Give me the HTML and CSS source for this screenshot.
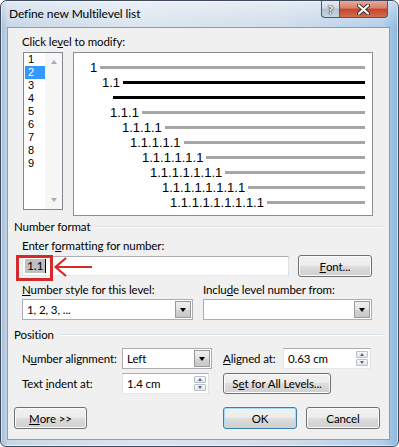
FILE: index.html
```html
<!DOCTYPE html>
<html lang="en">
<head>
    <meta charset="UTF-8">
    <meta name="viewport" content="width=device-width, initial-scale=1.0">
    <title>Define new Multilevel list</title>
    <link rel="stylesheet" href="styles.css">
</head>
<body>

    <div class="window">
        <!-- Title bar -->
        <div class="titlebar">
            <span class="title">Define new Multilevel list</span>
            <div class="caption-buttons">
                <span class="cap-btn help">?</span>
                <span class="cap-btn close">
                    <svg width="13" height="11" viewBox="0 0 13 11">
                        <path d="M2 1.5 L11 9.5 M11 1.5 L2 9.5" stroke="#3a2a2a" stroke-width="4" stroke-linecap="round"/>
                        <path d="M2 1.5 L11 9.5 M11 1.5 L2 9.5" stroke="#ffffff" stroke-width="2.2" stroke-linecap="round"/>
                    </svg>
                </span>
            </div>
        </div>

        <div class="client">
            <div class="label indent first-label">Click le<u>v</u>el to modify:</div>

            <!-- Level list and preview -->
            <div class="level-row">
                <div class="listbox">
                    <div class="items">
                        <div class="item">1</div>
                        <div class="item selected">2</div>
                        <div class="item">3</div>
                        <div class="item">4</div>
                        <div class="item">5</div>
                        <div class="item">6</div>
                        <div class="item">7</div>
                        <div class="item">8</div>
                        <div class="item">9</div>
                    </div>
                    <div class="vscroll">
                        <span class="arrow-up"></span>
                        <span class="arrow-down"></span>
                    </div>
                </div>

                <div class="preview">
                    <div class="pv-row lv1"><span class="pv-num">1</span><span class="pv-bar"></span></div>
                    <div class="pv-row lv2 current"><span class="pv-num">1.1</span><span class="pv-bar"></span></div>
                    <div class="pv-row lv2-wrap current"><span class="pv-bar"></span></div>
                    <div class="pv-row lv3"><span class="pv-num">1.1.1</span><span class="pv-bar"></span></div>
                    <div class="pv-row lv4"><span class="pv-num">1.1.1.1</span><span class="pv-bar"></span></div>
                    <div class="pv-row lv5"><span class="pv-num">1.1.1.1.1</span><span class="pv-bar"></span></div>
                    <div class="pv-row lv6"><span class="pv-num">1.1.1.1.1.1</span><span class="pv-bar"></span></div>
                    <div class="pv-row lv7"><span class="pv-num">1.1.1.1.1.1.1</span><span class="pv-bar"></span></div>
                    <div class="pv-row lv8"><span class="pv-num">1.1.1.1.1.1.1.1</span><span class="pv-bar"></span></div>
                    <div class="pv-row lv9"><span class="pv-num">1.1.1.1.1.1.1.1.1</span><span class="pv-bar"></span></div>
                </div>
            </div>

            <!-- Number format -->
            <div class="group group-number">Number format</div>
            <div class="label indent format-label">Enter f<u>o</u>rmatting for number:</div>

            <div class="entry-row">
                <div class="textbox">
                    <span class="field-code">1.1</span><span class="caret"></span>
                </div>
                <button class="btn font-btn"><u>F</u>ont...</button>

                <!-- Callout drawn over the field -->
                <div class="callout-box"></div>
                <svg class="callout-arrow" width="40" height="22" viewBox="0 0 40 22">
                    <path d="M3 11 L39 11" stroke="#d42a2a" stroke-width="2.2" fill="none"/>
                    <path d="M13 2 L2.5 11 L13 20" stroke="#d42a2a" stroke-width="2.2" fill="none"/>
                </svg>
            </div>

            <div class="label-pair">
                <span class="col1"><u>N</u>umber style for this level:</span>
                <span>Inclu<u>d</u>e level number from:</span>
            </div>

            <div class="combo-row">
                <div class="combo style-combo">
                    <span class="combo-text">1, 2, 3, ...</span>
                    <span class="combo-btn"><span class="tri-down"></span></span>
                </div>
                <div class="combo include-combo">
                    <span class="combo-text"></span>
                    <span class="combo-btn"><span class="tri-down"></span></span>
                </div>
            </div>

            <!-- Position -->
            <div class="group group-position">Position</div>

            <div class="pos-row align-row">
                <span class="pos-label">N<u>u</u>mber alignment:</span>
                <div class="combo align-combo">
                    <span class="combo-text">Left</span>
                    <span class="combo-btn"><span class="tri-down"></span></span>
                </div>
                <span class="pos-label2"><u>A</u>ligned at:</span>
                <div class="spin aligned-spin">
                    <span class="spin-text">0.63 cm</span>
                    <span class="spin-btns">
                        <span class="spin-half"><span class="tri-up-s"></span></span>
                        <span class="spin-half"><span class="tri-down-s"></span></span>
                    </span>
                </div>
            </div>

            <div class="pos-row indent-row">
                <span class="pos-label">Text <u>i</u>ndent at:</span>
                <div class="spin indent-spin">
                    <span class="spin-text">1.4 cm</span>
                    <span class="spin-btns">
                        <span class="spin-half"><span class="tri-up-s"></span></span>
                        <span class="spin-half"><span class="tri-down-s"></span></span>
                    </span>
                </div>
                <button class="btn all-levels-btn">S<u>e</u>t for All Levels...</button>
            </div>

            <!-- Bottom buttons -->
            <div class="footer">
                <button class="btn more-btn"><u>M</u>ore &gt;&gt;</button>
                <button class="btn default ok-btn">OK</button>
                <button class="btn cancel-btn">Cancel</button>
            </div>
        </div>
    </div>

</body>
</html>
```

FILE: styles.css
```css
body {
    margin: 0;
    background-color: #ffffff;
    font-family: Lato, "Liberation Sans", sans-serif;
    font-size: 11.5px;
    letter-spacing: -0.1px;
    color: #000;
}

u {
    text-underline-offset: 1px;
}

/* Window frame */
.window {
    width: 399px;
    height: 447px;
    box-sizing: border-box;
    border: 1px solid #3d4b5c;
    border-radius: 7px 7px 6px 6px;
    display: flex;
    flex-direction: column;
    background:
        linear-gradient(to bottom, rgba(255, 255, 255, 0.45), rgba(255, 255, 255, 0) 26px),
        linear-gradient(to right, #a3bddb 0, #c8d7e7 7px, #dbe5ef 35%, #d2deea 70%, #b4cfea 96%, #8fb7df 100%);
    box-shadow: inset 0 0 0 1px rgba(255, 255, 255, 0.55);
}

.titlebar {
    height: 26px;
    flex-shrink: 0;
    display: flex;
    align-items: flex-start;
    padding: 0 10px 0 8px;
}

.title {
    margin-top: 6px;
    line-height: 14px;
    font-size: 12px;
    color: #000;
}

.caption-buttons {
    margin-left: auto;
    display: flex;
    height: 17px;
}

.cap-btn {
    box-sizing: border-box;
    height: 17px;
    border: 1px solid #4d5a6b;
    border-top: none;
    display: flex;
    align-items: center;
    justify-content: center;
}

.help {
    width: 18px;
    border-right: none;
    border-radius: 0 0 0 4px;
    background: linear-gradient(to bottom, #e6ecf2 0%, #cfd9e4 45%, #b3c3d5 50%, #c6d6e6 100%);
    color: #ffffff;
    font-weight: bold;
    font-size: 12px;
    text-shadow: 0 0 1px #2a3440, 0 0 1px #2a3440, 0 0 2px #2a3440;
}

.close {
    width: 49px;
    border-radius: 0 0 4px 0;
    background: linear-gradient(to bottom, #e9a897 0%, #d9806a 45%, #c2452b 50%, #d26c4d 100%);
}

.client {
    flex: 1;
    margin: 0 8px 6px 6px;
    background-color: #f0f0f0;
    border: 1px solid #8e9bab;
}

.label {
    line-height: 14px;
    height: 14px;
    white-space: nowrap;
}

.indent {
    padding-left: 14px;
}

.first-label {
    margin-top: 7px;
}

/* Level list and preview */
.level-row {
    display: flex;
    margin-top: 3px;
    padding-left: 15px;
    height: 164px;
}

.listbox {
    width: 40px;
    height: 158px;
    box-sizing: border-box;
    border: 1px solid #828790;
    background-color: #ffffff;
    display: flex;
}

.items {
    margin-left: 1px;
    width: 20px;
}

.item {
    height: 13px;
    line-height: 13px;
    padding-left: 3px;
    font-family: "Liberation Sans", Arial, sans-serif;
    font-size: 11px;
    letter-spacing: 0;
}

.item.selected {
    background-color: #3399ff;
    color: #ffffff;
}

.vscroll {
    width: 17px;
    background-color: #f6f6f6;
    display: flex;
    flex-direction: column;
    justify-content: space-between;
    align-items: center;
    padding: 7px 0;
    box-sizing: border-box;
}

.arrow-up {
    border-left: 3.5px solid transparent;
    border-right: 3.5px solid transparent;
    border-bottom: 4px solid #acacac;
}

.arrow-down {
    border-left: 3.5px solid transparent;
    border-right: 3.5px solid transparent;
    border-top: 4px solid #acacac;
}

.preview {
    margin-left: 10px;
    width: 300px;
    height: 164px;
    box-sizing: border-box;
    border: 1px solid #8d8d8d;
    background-color: #ffffff;
    padding: 7px 7px 0 0;
}

.pv-row {
    display: flex;
    align-items: center;
    height: 15px;
    font-family: "Liberation Sans", Arial, sans-serif;
    font-size: 13px;
    letter-spacing: 0;
    line-height: 15px;
    white-space: nowrap;
}

.pv-bar {
    flex: 1;
    height: 3px;
    margin-left: 3px;
    background-color: #a6a6a6;
}

.current .pv-bar {
    background-color: #000000;
}

.lv1 { padding-left: 16px; }
.lv2 { padding-left: 28px; }
.lv2-wrap { padding-left: 36px; }
.lv3 { padding-left: 36px; }
.lv4 { padding-left: 48px; }
.lv5 { padding-left: 56px; }
.lv6 { padding-left: 68px; }
.lv7 { padding-left: 76px; }
.lv8 { padding-left: 88px; }
.lv9 { padding-left: 96px; }

/* Group headers with etched line */
.group {
    display: flex;
    align-items: center;
    height: 14px;
    line-height: 14px;
    padding: 0 6px;
}

.group::after {
    content: '';
    flex: 1;
    margin-left: 5px;
    border-top: 1px solid #d5dfe5;
    border-bottom: 1px solid #ffffff;
}

.group-number {
    margin-top: 4px;
}

.format-label {
    margin-top: 5px;
}

/* Formatting field */
.entry-row {
    position: relative;
    display: flex;
    align-items: center;
    height: 22px;
    margin-top: 2px;
    padding-left: 14px;
}

.textbox {
    width: 267px;
    height: 20px;
    box-sizing: border-box;
    border: 1px solid;
    border-color: #abadb3 #dbdfe6 #e3e9ef #e2e3ea;
    background-color: #ffffff;
    display: flex;
    align-items: center;
    padding-left: 2px;
}

.field-code {
    background-color: #c0c0c0;
    padding: 0 2px;
    line-height: 14px;
    font-size: 12px;
}

.caret {
    width: 1px;
    height: 14px;
    background-color: #000000;
}

.callout-box {
    position: absolute;
    left: 8px;
    top: 0;
    width: 37px;
    height: 26px;
    box-sizing: border-box;
    border: 3px solid #d42a2a;
}

.callout-arrow {
    position: absolute;
    left: 45px;
    top: 1px;
}

/* Buttons */
.btn {
    box-sizing: border-box;
    height: 22px;
    border: 1px solid #707070;
    border-radius: 3px;
    background: linear-gradient(to bottom, #f2f2f2 0%, #ebebeb 50%, #dddddd 50%, #cfcfcf 100%);
    box-shadow: inset 0 0 0 1px #fbfbfb;
    font-family: Lato, "Liberation Sans", sans-serif;
    font-size: 11.5px;
    letter-spacing: -0.1px;
    color: #000;
    padding: 0;
    display: flex;
    align-items: center;
    justify-content: center;
}

.btn.default {
    border-color: #3c7fb1;
    box-shadow: inset 0 0 0 1px #a9ddf5;
}

.font-btn {
    margin-left: 9px;
    width: 74px;
}

/* Number style row */
.label-pair {
    display: flex;
    margin-top: 6px;
    padding-left: 14px;
    height: 14px;
    line-height: 14px;
    white-space: nowrap;
}

.label-pair .col1 {
    width: 181px;
}

.combo-row {
    display: flex;
    margin-top: 2px;
    padding-left: 14px;
}

.combo {
    height: 21px;
    box-sizing: border-box;
    border: 1px solid #abadb3;
    background-color: #ffffff;
    display: flex;
    align-items: stretch;
}

.combo-text {
    flex: 1;
    padding-left: 4px;
    line-height: 19px;
    white-space: nowrap;
}

.combo-btn {
    width: 14px;
    margin: 1px;
    border: 1px solid #9a9a9a;
    background: linear-gradient(to bottom, #f0f0f0 0%, #e2e2e2 50%, #d2d2d2 51%, #c8c8c8 100%);
    display: flex;
    align-items: center;
    justify-content: center;
}

.tri-down {
    border-left: 3.5px solid transparent;
    border-right: 3.5px solid transparent;
    border-top: 4px solid #000000;
}

.style-combo {
    width: 171px;
}

.include-combo {
    width: 169px;
    margin-left: 10px;
}

.group-position {
    margin-top: 8px;
}

/* Position rows */
.pos-row {
    display: flex;
    align-items: center;
    height: 21px;
    padding-left: 14px;
    white-space: nowrap;
}

.align-row {
    margin-top: 6px;
}

.indent-row {
    margin-top: 4px;
}

.pos-label {
    width: 100px;
}

.pos-label2 {
    width: 60px;
    margin-left: 11px;
}

.align-combo {
    width: 90px;
}

.spin {
    height: 21px;
    box-sizing: border-box;
    border: 1px solid;
    border-color: #abadb3 #dbdfe6 #e3e9ef #e2e3ea;
    background-color: #ffffff;
    display: flex;
}

.spin-text {
    flex: 1;
    padding-left: 4px;
    line-height: 19px;
}

.spin-btns {
    width: 12px;
    margin: 2px 2px 2px 0;
    display: flex;
    flex-direction: column;
    gap: 1px;
}

.spin-half {
    flex: 1;
    box-sizing: border-box;
    border: 1px solid #b8c1cc;
    border-radius: 1px;
    background: linear-gradient(to bottom, #f6f8fa, #dfe5eb);
    display: flex;
    align-items: center;
    justify-content: center;
}

.tri-up-s {
    border-left: 2.5px solid transparent;
    border-right: 2.5px solid transparent;
    border-bottom: 3px solid #56667c;
}

.tri-down-s {
    border-left: 2.5px solid transparent;
    border-right: 2.5px solid transparent;
    border-top: 3px solid #56667c;
}

.aligned-spin {
    width: 88px;
}

.indent-spin {
    width: 87px;
}

.all-levels-btn {
    margin-left: 14px;
    width: 108px;
    height: 21px;
}

/* Footer buttons */
.footer {
    display: flex;
    margin-top: 13px;
    padding-left: 6px;
}

.more-btn {
    width: 73px;
}

.ok-btn {
    width: 74px;
    margin-left: 136px;
}

.cancel-btn {
    width: 74px;
    margin-left: 9px;
}
```
